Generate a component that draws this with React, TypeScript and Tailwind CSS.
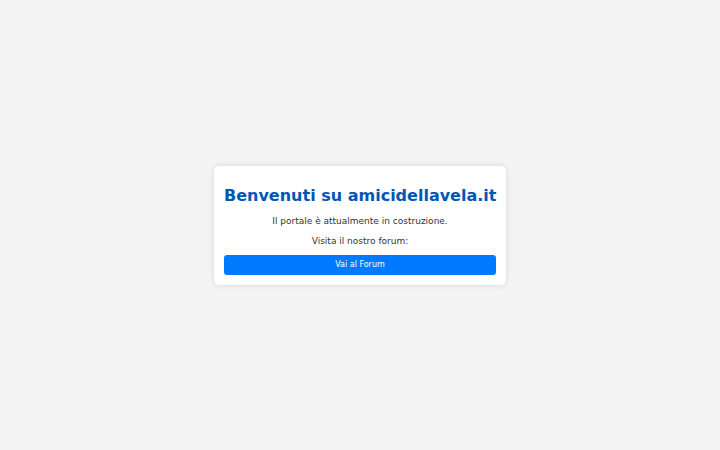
export default function App() {
  return (
    <div
      className="flex h-[450px] w-full items-center justify-center bg-[#f4f4f4]"
      style={{ fontFamily: '"DejaVu Sans", sans-serif' }}
    >
      <div className="w-[292px] rounded-[5px] bg-white p-[10px] text-center shadow-[0_0_6px_rgba(0,0,0,0.12)]">
        <h1 className="mt-[10px] whitespace-nowrap text-[16px] font-bold leading-[19px] text-[#0056b3]">
          Benvenuti su amicidellavela.it
        </h1>
        <p className="mt-[11px] text-[9px] leading-[11px] text-[#333]">
          Il portale è attualmente in costruzione.
        </p>
        <p className="mt-[9px] text-[9px] leading-[11px] text-[#333]">
          Visita il nostro forum:
        </p>
        <a
          href="#"
          className="mt-[8px] flex h-[20px] w-full items-center justify-center rounded-[3px] bg-[#007bff] text-[8px] text-white"
        >
          Vai al Forum
        </a>
      </div>
    </div>
  );
}
